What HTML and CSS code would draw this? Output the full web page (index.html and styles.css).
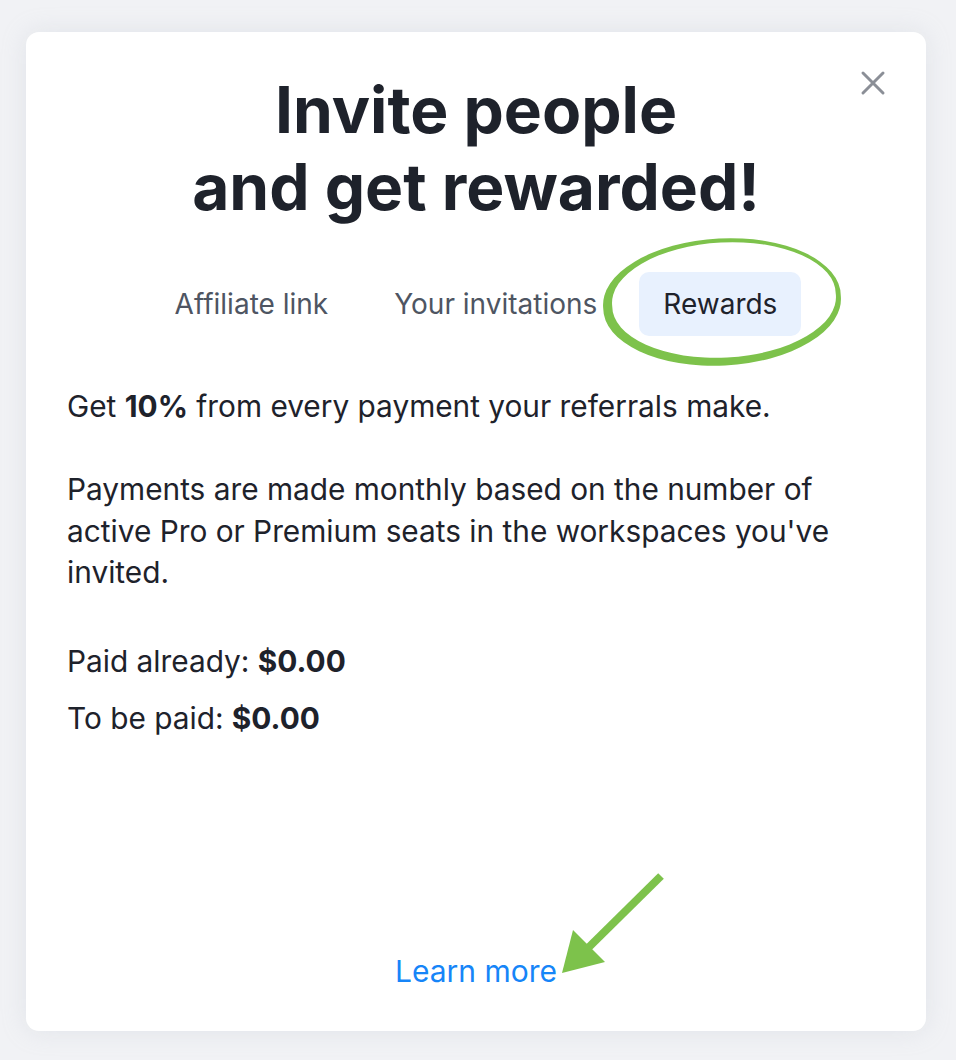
FILE: index.html
```html
<!DOCTYPE html>
<html lang="en">
<head>
<meta charset="utf-8">
<title>Invite people and get rewarded!</title>
<link rel="stylesheet" href="styles.css">
</head>
<body>
<div class="backdrop">
  <div class="modal">
    <button class="close" aria-label="Close">
      <svg width="26" height="26" viewBox="0 0 26 26"><path d="M3 3 L23 23 M23 3 L3 23" stroke="#8b8f97" stroke-width="3" stroke-linecap="round" fill="none"/></svg>
    </button>
    <h1 class="title">Invite people<br>and get rewarded!</h1>
    <div class="tabs">
      <div class="tab">Affiliate link</div>
      <div class="tab">Your invitations</div>
      <div class="tab tab-active">Rewards</div>
    </div>
    <div class="content">
      <p class="para">Get <b>10%</b> from every payment your referrals make.</p>
      <p class="para">Payments are made monthly based on the number of active Pro or Premium seats in the workspaces you've invited.</p>
      <div class="stat">Paid already: <b>$0.00</b></div>
      <div class="stat">To be paid: <b>$0.00</b></div>
    </div>
    <a class="learn" href="#">Learn more</a>
  </div>
  <svg class="annot" width="956" height="1060" viewBox="0 0 956 1060">
    <path fill="#7dc24b" fill-rule="evenodd" d="M603.2 308.2 A119 62 -3 1 0 840.8 295.8 A119 62 -3 1 0 603.2 308.2 Z M612.2 305.9 A112 56 -3 1 0 835.8 294.1 A112 56 -3 1 0 612.2 305.9 Z"/>
    <path d="M661 876 L588 948" stroke="#7dc24b" stroke-width="8" fill="none"/>
    <polygon fill="#7dc24b" points="562,973 573,930 605,962"/>
  </svg>
</div>
</body>
</html>
```

FILE: styles.css
```css
* { box-sizing: border-box; }
html, body { margin: 0; padding: 0; }
body {
  background: #f1f2f5;
  font-family: Inter, "Noto Sans", sans-serif;
  color: #1e222b;
}
.backdrop {
  position: relative;
  width: 956px;
  height: 1060px;
  padding: 32px 30px 29px 26px;
}
.modal {
  position: relative;
  width: 900px;
  height: 999px;
  background: #ffffff;
  border-radius: 13px;
  box-shadow: 0 0 24px rgba(180, 186, 198, 0.25);
  display: flex;
  flex-direction: column;
  align-items: center;
  padding: 39px 41px 42px 41px;
}
.close {
  position: absolute;
  top: 38px;
  right: 40px;
  background: none;
  border: 0;
  padding: 0;
  width: 26px;
  height: 26px;
  cursor: pointer;
}
.close svg { display: block; }
.title {
  margin: 0;
  font-size: 64px;
  line-height: 77px;
  font-weight: 700;
  text-align: center;
  color: #1e222b;
}
.tabs {
  display: flex;
  gap: 18px;
  margin-top: 47px;
}
.tab {
  font-size: 28px;
  line-height: 64px;
  height: 64px;
  padding: 0 24px;
  color: #4e5562;
  border-radius: 10px;
}
.tab-active {
  background: #e8f1fe;
  color: #1e222b;
}
.content {
  align-self: stretch;
  margin-top: 50px;
  font-size: 29.8px;
  line-height: 41.5px;
  color: #1e222b;
}
.para { margin: 0 0 41.5px 0; }
.para + .stat { margin-top: 47.5px; }
.stat { margin-bottom: 15.5px; }
.stat b, .para b { font-weight: 700; }
.learn {
  margin-top: auto;
  font-size: 30px;
  line-height: 36px;
  color: #1685f8;
  text-decoration: none;
}
.annot {
  position: absolute;
  left: 0;
  top: 0;
  pointer-events: none;
}
```
